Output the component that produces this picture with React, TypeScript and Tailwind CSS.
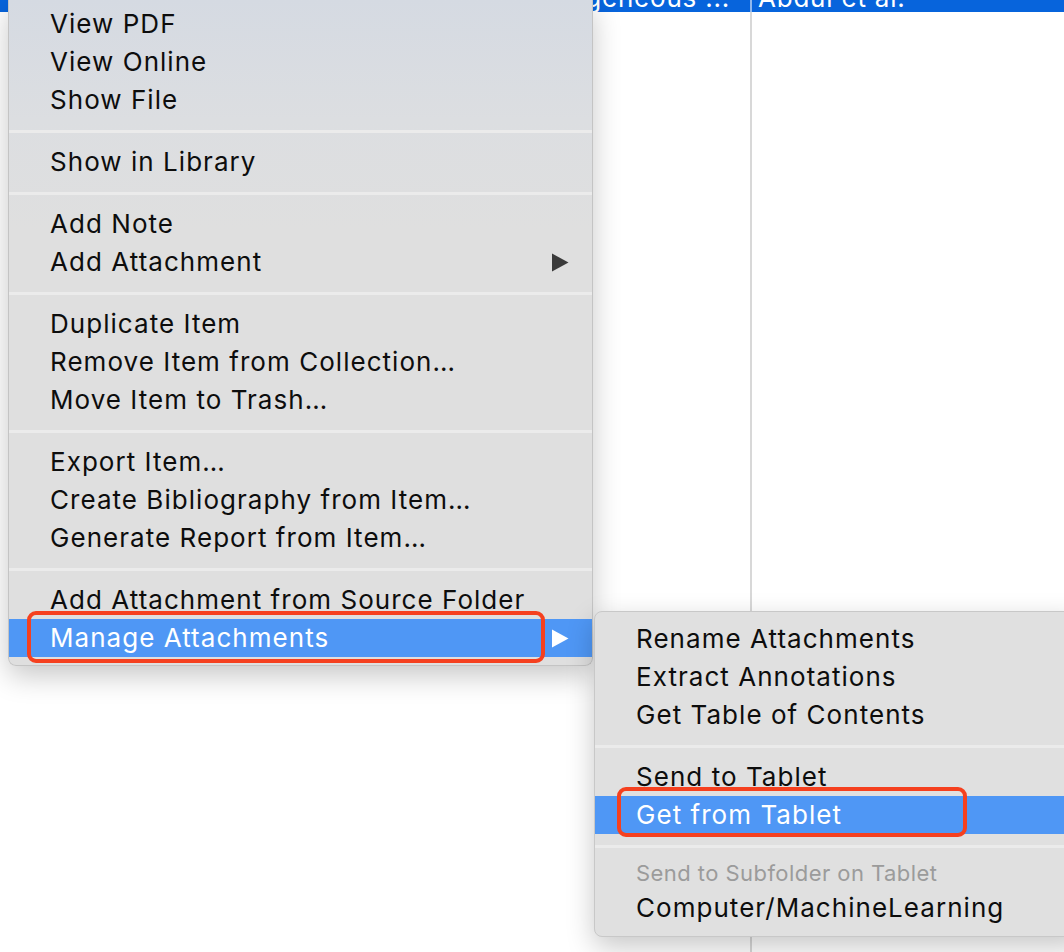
import React from 'react';

type Entry =
  | { kind: 'item'; label: string; arrow?: boolean; active?: boolean }
  | { kind: 'sep' }
  | { kind: 'head'; label: string };

const mainMenu: Entry[] = [
  { kind: 'item', label: 'View PDF' },
  { kind: 'item', label: 'View Online' },
  { kind: 'item', label: 'Show File' },
  { kind: 'sep' },
  { kind: 'item', label: 'Show in Library' },
  { kind: 'sep' },
  { kind: 'item', label: 'Add Note' },
  { kind: 'item', label: 'Add Attachment', arrow: true },
  { kind: 'sep' },
  { kind: 'item', label: 'Duplicate Item' },
  { kind: 'item', label: 'Remove Item from Collection…' },
  { kind: 'item', label: 'Move Item to Trash…' },
  { kind: 'sep' },
  { kind: 'item', label: 'Export Item…' },
  { kind: 'item', label: 'Create Bibliography from Item…' },
  { kind: 'item', label: 'Generate Report from Item…' },
  { kind: 'sep' },
  { kind: 'item', label: 'Add Attachment from Source Folder' },
  { kind: 'item', label: 'Manage Attachments', arrow: true, active: true },
];

const subMenu: Entry[] = [
  { kind: 'item', label: 'Rename Attachments' },
  { kind: 'item', label: 'Extract Annotations' },
  { kind: 'item', label: 'Get Table of Contents' },
  { kind: 'sep' },
  { kind: 'item', label: 'Send to Tablet' },
  { kind: 'item', label: 'Get from Tablet', active: true },
  { kind: 'sep' },
  { kind: 'head', label: 'Send to Subfolder on Tablet' },
  { kind: 'item', label: 'Computer/MachineLearning' },
];

function Arrow({ white }: { white?: boolean }) {
  return (
    <svg width="18" height="19" viewBox="0 0 18 19" className="shrink-0">
      <path d="M1 0.5 L17.5 9.5 L1 18.5 Z" fill={white ? '#ffffff' : '#3a3a3a'} />
    </svg>
  );
}

function MenuList({ entries }: { entries: Entry[] }) {
  return (
    <>
      {entries.map((e, i) => {
        if (e.kind === 'sep') {
          return (
            <div key={i} className="pt-[11px] pb-[10px]">
              <div className="h-[3px] bg-[#ebebeb]" />
            </div>
          );
        }
        if (e.kind === 'head') {
          return (
            <div key={i} className="h-[31px] flex items-center pl-[41px] text-[22px] tracking-[0.02em] text-[#9b9b9b]">
              {e.label}
            </div>
          );
        }
        return (
          <div
            key={i}
            className={
              'h-[38px] flex items-center justify-between pl-[41px] pr-[23px] ' +
              (e.active ? 'bg-[#4f97f5] text-white' : 'text-[#0d0d0d]')
            }
          >
            <span className="-mt-[1px]">{e.label}</span>
            {e.arrow && <Arrow white={e.active} />}
          </div>
        );
      })}
    </>
  );
}

export default function App() {
  return (
    <div
      className="relative w-[1064px] h-[952px] bg-white overflow-hidden"
      style={{ fontFamily: 'Inter, "Open Sans", sans-serif' }}
    >
      {/* list header row, mostly hidden behind the menu */}
      <div className="flex h-[12px] bg-[#0764dc] overflow-hidden text-white text-[26px] leading-none tracking-[0.03em]">
        <div className="w-[750px] flex justify-end pr-[20px]">
          <span className="-mt-[15px]">Heterogeneous ...</span>
        </div>
        <div className="w-[2px] bg-[#8fb8ee]" />
        <div className="flex-1 pl-[6px]">
          <span className="-mt-[15px] block">Abdul et al.</span>
        </div>
      </div>
      <div className="flex h-[940px]">
        <div className="w-[750px]" />
        <div className="w-[2px] bg-[#d8d8d8]" />
        <div className="flex-1" />
      </div>

      {/* context menu */}
      <div className="absolute left-[8px] top-0 w-[585px] pt-[5px] pb-[8px] rounded-b-[8px] border-x border-b border-[#c4c4c4] bg-[linear-gradient(to_bottom,#d5dae2_0px,#dcdee1_120px,#dfdfdf_230px,#dfdfdf_100%)] shadow-[0_10px_28px_rgba(0,0,0,0.22)] text-[26px] tracking-[0.04em]">
        <MenuList entries={mainMenu} />
      </div>

      {/* submenu */}
      <div className="absolute left-[594px] top-[611px] w-[490px] pt-[8px] pb-[9px] rounded-l-[8px] border border-[#c8c8c8] bg-[#e0e0e0] shadow-[0_10px_28px_rgba(0,0,0,0.22)] text-[26px] tracking-[0.04em]">
        <MenuList entries={subMenu} />
      </div>

      {/* annotation outlines */}
      <div className="absolute left-[27px] top-[611px] w-[518px] h-[52px] rounded-[9px] border-[4px] border-[#f5401f]" />
      <div className="absolute left-[617px] top-[787px] w-[350px] h-[50px] rounded-[9px] border-[4px] border-[#f5401f]" />
    </div>
  );
}
